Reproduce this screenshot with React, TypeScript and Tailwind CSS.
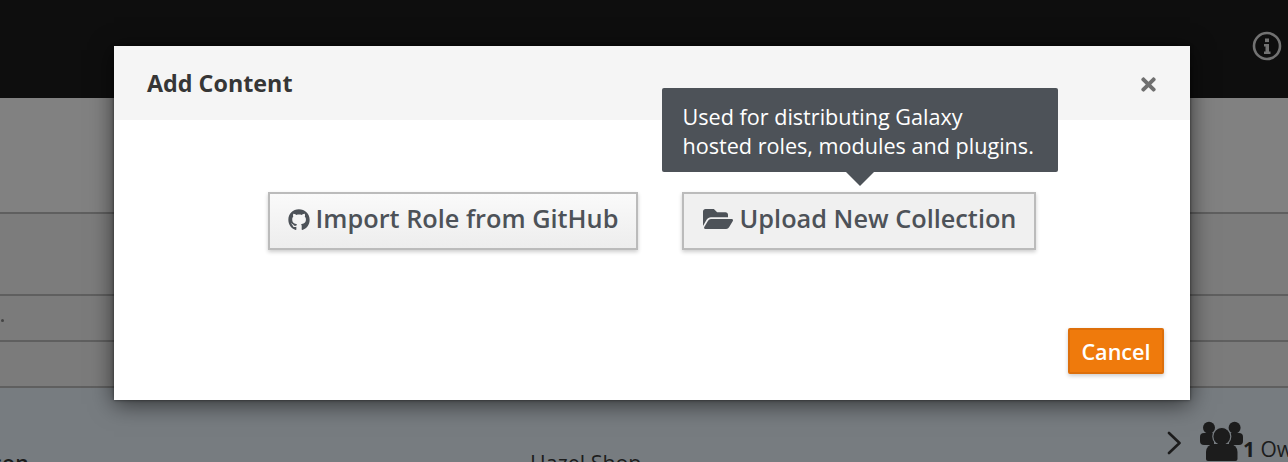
import React from "react";
import { FaFolderOpen, FaGithub, FaTimes } from "react-icons/fa";

const font = { fontFamily: '"Open Sans", "Noto Sans", sans-serif' };

const InfoIcon = () => (
  <svg width="30" height="30" viewBox="0 0 30 30" className="text-[#727272]">
    <circle cx="15" cy="15" r="13" fill="none" stroke="currentColor" strokeWidth="2.6" />
    <rect x="13" y="7.5" width="4" height="3.6" fill="currentColor" />
    <path d="M12 13h5v7.5h1.5V23h-6.5v-2.5h1.5v-5H12z" fill="currentColor" />
  </svg>
);

const Chevron = () => (
  <svg width="14" height="24" viewBox="0 0 14 24" fill="none" stroke="currentColor" strokeWidth="2.6" strokeLinecap="round" strokeLinejoin="round">
    <path d="M2 2l10.5 10L2 22" />
  </svg>
);

const UsersIcon = () => (
  <svg width="44" height="42" viewBox="0 0 44 42" fill="currentColor">
    <circle cx="9" cy="7.7" r="6" />
    <circle cx="34.6" cy="7.7" r="6" />
    <path d="M0 17a4 4 0 0 1 4-4h10v12H4a4 4 0 0 1-4-4z" />
    <path d="M43 17a4 4 0 0 0-4-4H29v12h10a4 4 0 0 0 4-4z" />
    <circle cx="21.8" cy="16.5" r="9" stroke="#777c80" strokeWidth="1.2" />
    <path d="M6 32a8 8 0 0 1 8-8h15.5a8 8 0 0 1 8 8v7a2 2 0 0 1-2 2H8a2 2 0 0 1-2-2z" />
  </svg>
);

const App = () => {
  return (
    <div className="relative h-[462px] w-[1288px] overflow-hidden bg-[#7f7f7f]" style={font}>
      {/* Page behind the modal */}
      <div className="h-[98px] bg-[#0e0e0e] flex justify-end items-start pt-[31px] pr-[6px]">
        <InfoIcon />
      </div>
      <div className="h-[116px] border-b-2 border-[#5f5f5f] bg-[#818181]" />
      <div className="h-[82px] border-b-2 border-[#5f5f5f] bg-[#7c7c7c]" />
      <div className="h-[46px] border-b-2 border-[#5f5f5f] bg-[#7b7b7b] flex items-center pl-px">
        <span className="h-[3px] w-[3px] rounded-full bg-[#444444] mt-[4px]" />
      </div>
      <div className="h-[46px] border-b-2 border-[#5f5f5f] bg-[#7b7b7b]" />
      <div className="h-[74px] bg-[#777c80] text-[#1c1c1c] text-[21.4px] leading-[32px] flex pt-[59px] whitespace-nowrap">
        <span className="w-[530px] shrink-0 font-semibold">
          <span className="-ml-[43px]">Person</span>
        </span>
        <span>Hazel Shop</span>
      </div>

      {/* Bottom right owner info */}
      <div className="absolute left-[1167px] top-[420px] flex items-start text-[#1c1c1c] whitespace-nowrap">
        <span className="mt-[11px]">
          <Chevron />
        </span>
        <span className="ml-[19px]">
          <UsersIcon />
        </span>
        <span className="text-[21px] leading-[28px] mt-[15px] -ml-[1px]">
          <b>1</b> Owner
        </span>
      </div>

      {/* Modal */}
      <div className="absolute left-[114px] top-[46px] h-[354px] w-[1076px] flex flex-col bg-white shadow-[0_4px_22px_rgba(0,0,0,0.6),0_0_3px_rgba(0,0,0,0.5)]">
        <div className="h-[74px] shrink-0 bg-[#f5f5f5] flex items-center justify-between pl-[33px] pr-[33px]">
          <h4 className="text-[23.3px] font-bold text-[#363636] leading-[30px]">Add Content</h4>
          <FaTimes size={21} className="text-[#6f6f6f] -mr-[2px] mt-[3px]" />
        </div>

        <div className="flex justify-center gap-[44px] mt-[72px] pr-[1px] text-[#4d5258] text-[25.3px] font-semibold">
          <button className="h-[58px] w-[370px] pb-[4px] pl-[1px] flex items-center justify-center gap-[6px] border-2 border-[#bbbbbb] bg-gradient-to-b from-[#fafafa] to-[#ededed] shadow-[0_2px_4px_rgba(0,0,0,0.2)]">
            <FaGithub size={22} className="mt-[2px]" />
            Import Role from GitHub
          </button>
          <div className="relative">
            <button className="h-[58px] w-[354px] pb-[4px] pl-[2px] flex items-center justify-center gap-[7px] border-2 border-[#bbbbbb] bg-[#f0f0f0] shadow-[0_2px_4px_rgba(0,0,0,0.2)]">
              <FaFolderOpen size={30} className="-mt-[1px]" />
              Upload New Collection
            </button>
            {/* Tooltip */}
            <div className="absolute left-[-20px] top-[-104px] h-[84px] w-[396px] rounded-[2px] bg-[#4d5258] pl-[21px] pt-[14px] text-white text-[21.6px] leading-[29px] font-normal whitespace-nowrap">
              Used for distributing Galaxy
              <br />
              hosted roles, modules and plugins.
              <span className="absolute left-[184px] top-[84px] h-0 w-0 border-x-[14px] border-t-[14px] border-x-transparent border-t-[#4d5258]" />
            </div>
          </div>
        </div>

        <div className="mt-auto flex justify-end pr-[26px] pb-[26px]">
          <button className="h-[46px] w-[96px] pt-[3px] rounded-[2px] border-2 border-[#dd6f0b] bg-[#ef7a0c] text-white text-[21.6px] font-semibold shadow-[0_2px_4px_rgba(0,0,0,0.2)]">
            Cancel
          </button>
        </div>
      </div>
    </div>
  );
};

export default App;
